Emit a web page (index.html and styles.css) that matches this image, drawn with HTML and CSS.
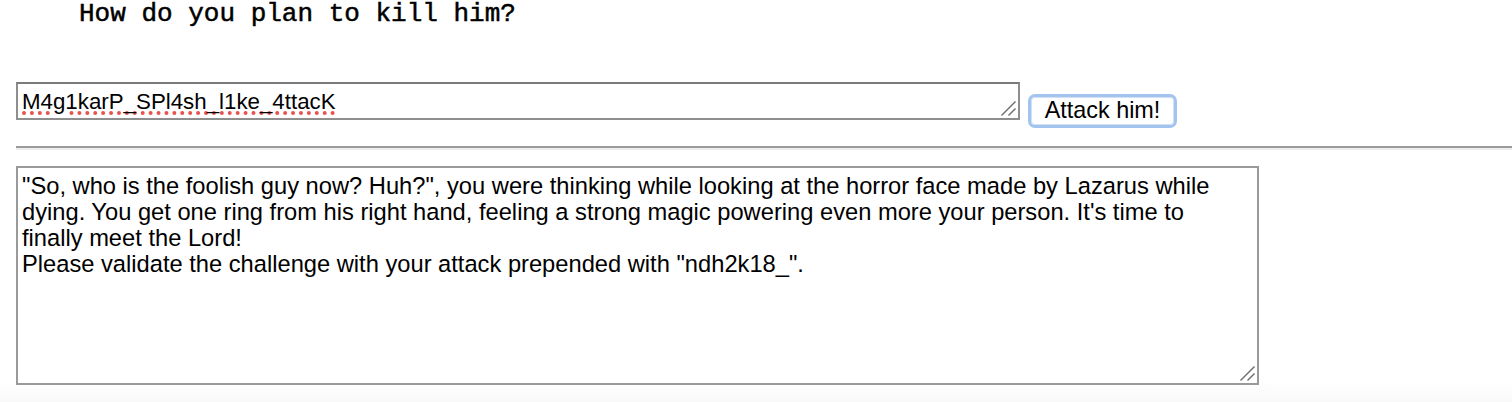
FILE: index.html
```html
<!DOCTYPE html>
<html lang="en">
<head>
<meta charset="utf-8">
<title>How do you plan to kill him?</title>
<link rel="stylesheet" href="styles.css">
</head>
<body>
<main class="page">
  <pre class="question">How do you plan to kill him?</pre>
  <form class="attack-row">
    <div class="field field-attack">
      <textarea class="attack-input" spellcheck="false">M4g1karP_SPl4sh_l1ke_4ttacK</textarea>
      <svg class="grip" viewBox="0 0 15 15" width="15" height="15" aria-hidden="true">
        <line x1="0.5" y1="14.5" x2="14.5" y2="0.5"/>
        <line x1="7.5" y1="14.5" x2="14.5" y2="7.5"/>
      </svg>
    </div>
    <button type="button" class="attack-btn">Attack him!</button>
  </form>
  <hr class="divider">
  <div class="field field-story">
    <textarea class="story" spellcheck="false">"So, who is the foolish guy now? Huh?", you were thinking while looking at the horror face made by Lazarus while dying. You get one ring from his right hand, feeling a strong magic powering even more your person. It's time to finally meet the Lord!
Please validate the challenge with your attack prepended with "ndh2k18_".</textarea>
    <svg class="grip" viewBox="0 0 15 15" width="15" height="15" aria-hidden="true">
      <line x1="0.5" y1="14.5" x2="14.5" y2="0.5"/>
      <line x1="7.5" y1="14.5" x2="14.5" y2="7.5"/>
    </svg>
  </div>
</main>
</body>
</html>
```

FILE: styles.css
```css
html, body {
  margin: 0;
  padding: 0;
}

body {
  width: 1512px;
  height: 402px;
  overflow: hidden;
  background: linear-gradient(to bottom, #ffffff 0, #ffffff 380px, #f9f9f9 402px);
}

.page {
  padding: 0 0 0 16px;
  display: flex;
  flex-direction: column;
  align-items: flex-start;
}

.question {
  margin: 0;
  padding: 0 0 0 63px;
  font-family: "Liberation Mono", "Courier New", monospace;
  font-weight: normal;
  font-size: 26px;
  line-height: 28px;
  color: #000;
  -webkit-text-stroke: 0.5px #000;
}

.attack-row {
  margin: 54px 0 0 0;
  display: flex;
  align-items: flex-start;
  gap: 8px;
}

.field {
  position: relative;
  display: flex;
}

.grip {
  position: absolute;
  right: 4px;
  bottom: 4px;
  pointer-events: none;
}

.grip line {
  stroke: #6e6e6e;
  stroke-width: 1.4;
  stroke-linecap: butt;
}

.attack-input {
  box-sizing: border-box;
  width: 1004px;
  height: 38px;
  margin: 0;
  padding: 5px 4px 0 4px;
  border: 2px solid #8e8e8e;
  border-top-color: #7a7a7a;
  font-family: "Liberation Sans", Arial, sans-serif;
  font-size: 22.3px;
  line-height: 26px;
  color: #000;
  text-decoration: underline dotted #e8534f;
  text-decoration-thickness: 4px;
  text-underline-offset: 2px;
  resize: none;
  overflow: hidden;
  outline: none;
  background: #fff;
}

.attack-btn {
  box-sizing: border-box;
  margin: 12px 0 0 0;
  width: 149px;
  height: 34px;
  padding: 0 0 1px 0;
  border: 3px solid #a3c4ef;
  border-radius: 7px;
  background: #ffffff;
  box-shadow: inset 0 0 0 1px #d3e0f4;
  font-family: "Liberation Sans", Arial, sans-serif;
  font-size: 23.4px;
  color: #000;
}

.divider {
  align-self: stretch;
  margin: 18px 0 0 0;
  height: 0;
  border: 0;
  border-top: 2px solid #9a9a9a;
  border-bottom: 2px solid #eeeeee;
}

.field-story {
  margin-top: 16px;
}

.story {
  box-sizing: border-box;
  margin: 0;
  width: 1243px;
  height: 219px;
  padding: 5px 22px 5px 4px;
  border: 2px solid #9a9a9a;
  font-family: "Liberation Sans", Arial, sans-serif;
  font-size: 23.7px;
  line-height: 26px;
  color: #000;
  resize: none;
  overflow: hidden;
  outline: none;
  background: #fff;
}
```
